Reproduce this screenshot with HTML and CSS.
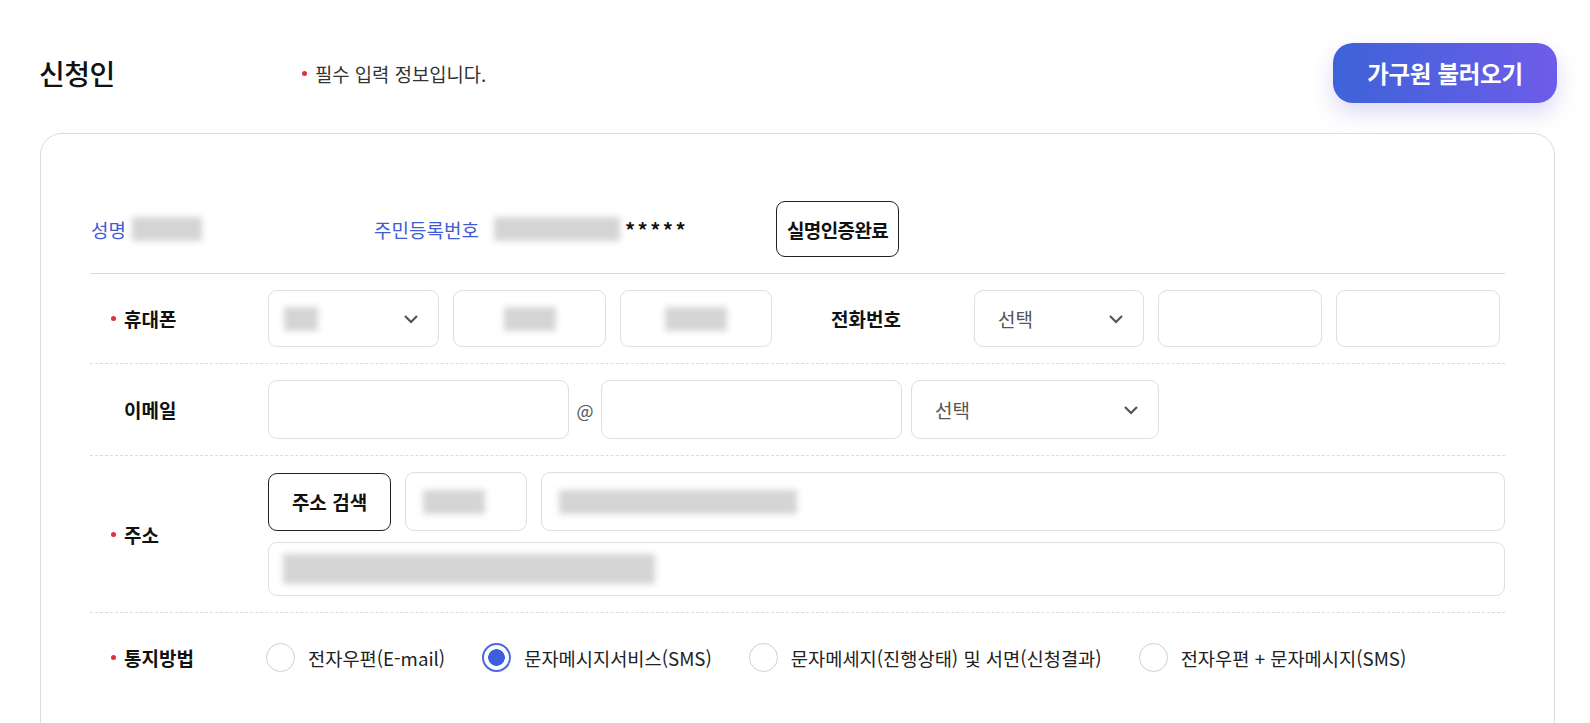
FILE: index.html
```html
<!DOCTYPE html>
<html lang="ko">
<head>
<meta charset="utf-8">
<title>신청인</title>
<link rel="stylesheet" href="styles.css">
</head>
<body>
<div class="page">
  <header class="head">
    <div class="title-wrap">
      <h2 class="title">신청인</h2>
      <p class="req-note"><span class="dot"></span>필수 입력 정보입니다.</p>
    </div>
    <button class="family-btn" type="button">가구원 불러오기</button>
  </header>

  <section class="card">
    <div class="id-row">
      <div class="id-name">
        <span class="id-label">성명</span>
        <span class="blur b-name"></span>
      </div>
      <div class="id-rrn">
        <span class="id-label">주민등록번호</span>
        <span class="blur b-rrn"></span>
        <span class="stars">*****</span>
      </div>
      <button class="verify-btn" type="button">실명인증완료</button>
    </div>

    <div class="frow">
      <div class="flabel"><span class="rdot"></span>휴대폰</div>
      <div class="field sel w-171"><span class="blur b-sm"></span><svg class="chev" width="16" height="10" viewBox="0 0 16 10"><path d="M2 2l6 6 6-6" fill="none" stroke="#555" stroke-width="2.2"/></svg></div>
      <div class="field center w-153"><span class="blur b-md"></span></div>
      <div class="field center w-152"><span class="blur b-md2"></span></div>
      <div class="tel-label">전화번호</div>
      <div class="field sel w-170"><span class="sel-text">선택</span><svg class="chev" width="16" height="10" viewBox="0 0 16 10"><path d="M2 2l6 6 6-6" fill="none" stroke="#555" stroke-width="2.2"/></svg></div>
      <div class="field w-164"></div>
      <div class="field w-164 end"></div>
    </div>

    <div class="frow">
      <div class="flabel"><span class="rdot off"></span>이메일</div>
      <div class="field tall w-301"></div>
      <span class="at">@</span>
      <div class="field tall w-301"></div>
      <div class="field tall sel w-248 ml-9"><span class="sel-text">선택</span><svg class="chev" width="16" height="10" viewBox="0 0 16 10"><path d="M2 2l6 6 6-6" fill="none" stroke="#555" stroke-width="2.2"/></svg></div>
    </div>

    <div class="frow">
      <div class="flabel"><span class="rdot"></span>주소</div>
      <div class="addr">
        <div class="addr-line">
          <button class="search-btn" type="button">주소 검색</button>
          <div class="field tall w-122 pad-l"><span class="blur b-zip"></span></div>
          <div class="field tall grow pad-l"><span class="blur b-addr"></span></div>
        </div>
        <div class="field short pad-s"><span class="blur b-addr2"></span></div>
      </div>
    </div>

    <div class="frow last">
      <div class="flabel"><span class="rdot"></span>통지방법</div>
      <div class="radios">
        <label class="radio"><span class="circle"></span>전자우편(E-mail)</label>
        <label class="radio"><span class="circle on"></span>문자메시지서비스(SMS)</label>
        <label class="radio"><span class="circle"></span>문자메세지(진행상태) 및 서면(신청결과)</label>
        <label class="radio"><span class="circle"></span>전자우편 + 문자메시지(SMS)</label>
      </div>
    </div>
  </section>
</div>
</body>
</html>
```

FILE: styles.css
```css
html, body {
  margin: 0;
  padding: 0;
  height: 723px;
  overflow: hidden;
  background: #fff;
}
body {
  font-family: "Noto Sans CJK KR", "Noto Sans", sans-serif;
  color: #222;
}
.page {
  padding: 43px 33px 0 39px;
}
.head {
  display: flex;
  justify-content: space-between;
  align-items: center;
  height: 60px;
}
.title-wrap {
  display: flex;
  align-items: center;
}
.title {
  margin: 0;
  width: 263px;
  font-size: 28px;
  font-weight: 500;
  color: #111;
  letter-spacing: -0.5px;
}
.req-note {
  margin: 0;
  display: flex;
  align-items: center;
  font-size: 18.8px;
  color: #333;
}
.dot, .rdot {
  display: inline-block;
  flex: none;
  width: 5px;
  height: 5px;
  border-radius: 50%;
  background: #e0303a;
  margin-right: 8px;
}
.rdot.off { visibility: hidden; }
.family-btn {
  width: 224px;
  height: 60px;
  border: 0;
  border-radius: 20px;
  background: linear-gradient(90deg, #3d63d8 0%, #6e5ce9 100%);
  color: #fff;
  font-family: inherit;
  font-size: 23.5px;
  font-weight: 700;
  letter-spacing: -0.3px;
  box-shadow: 0 10px 22px rgba(95, 85, 210, 0.22);
  padding: 0;
}
.card {
  margin: 30px 2px 0 1px;
  border: 1px solid #dcdcdc;
  border-radius: 22px;
  padding: 67px 49px 80px;
}
.id-row {
  display: flex;
  align-items: center;
  height: 56px;
  padding-bottom: 16px;
  border-bottom: 1px solid #dadada;
}
.id-name {
  width: 284px;
  flex: none;
  display: flex;
  align-items: center;
  padding-left: 1px;
  box-sizing: border-box;
}
.id-rrn {
  display: flex;
  align-items: center;
}
.id-label {
  color: #3f5bd6;
  font-size: 19px;
}
.blur {
  display: inline-block;
  flex: none;
  height: 24px;
  background: #cdcdcd;
  filter: blur(3px);
  opacity: 0.85;
}
.b-name { width: 70px; margin-left: 6px; }
.b-rrn { width: 126px; margin-left: 15px; }
.b-sm { width: 34px; }
.b-md { width: 52px; }
.b-md2 { width: 62px; }
.b-zip { width: 62px; }
.b-addr { width: 238px; }
.b-addr2 { width: 372px; height: 30px; }
.stars {
  font-size: 20px;
  font-weight: 700;
  letter-spacing: 2.5px;
  margin-left: 5px;
  color: #111;
}
.verify-btn {
  flex: none;
  margin-left: 88px;
  width: 123px;
  height: 56px;
  border: 1px solid #222;
  border-radius: 9px;
  background: #fff;
  font-family: inherit;
  font-size: 19px;
  font-weight: 700;
  letter-spacing: -0.6px;
  color: #111;
  padding: 0;
}
.frow {
  display: flex;
  align-items: center;
  padding: 16px 0;
  border-bottom: 1px dashed #dcdcdc;
}
.frow.last {
  border-bottom: 0;
  padding-top: 30px;
}
.flabel {
  width: 178px;
  flex: none;
  padding-left: 21px;
  box-sizing: border-box;
  display: flex;
  align-items: center;
  font-size: 19px;
  font-weight: 700;
  color: #111;
}
.field {
  flex: none;
  box-sizing: border-box;
  height: 57px;
  border: 1px solid #dedede;
  border-radius: 9px;
  background: #fff;
  display: flex;
  align-items: center;
  margin-right: 14px;
}
.field.end { margin-right: 0; }
.field.tall { height: 59px; }
.field.short { height: 54px; margin-right: 0; }
.field.center { justify-content: center; }
.field.sel {
  justify-content: space-between;
  padding: 0 19px 0 15px;
}
.field.grow { flex: 1; margin-right: 0; }
.pad-l { padding-left: 17px; }
.pad-s { padding-left: 14px; }
.sel-text {
  font-size: 19px;
  color: #555;
  padding-left: 8px;
}
.w-171 { width: 171px; }
.w-153 { width: 153px; }
.w-152 { width: 152px; }
.w-170 { width: 170px; }
.w-164 { width: 164px; }
.w-301 { width: 301px; margin-right: 0; }
.w-248 { width: 248px; }
.w-122 { width: 122px; }
.ml-9 { margin-left: 9px; }
.frow .field.w-152 { margin-right: 0; }
.tel-label {
  flex: none;
  margin-left: 59px;
  width: 143px;
  font-size: 19px;
  font-weight: 700;
  color: #111;
}
.at {
  flex: none;
  width: 32px;
  text-align: center;
  font-size: 18px;
  color: #555;
}
.chev { display: block; flex: none; }
.addr {
  flex: 1;
  display: flex;
  flex-direction: column;
  gap: 11px;
}
.addr-line {
  display: flex;
  align-items: center;
}
.search-btn {
  flex: none;
  width: 123px;
  height: 58px;
  border: 1px solid #222;
  border-radius: 9px;
  background: #fff;
  font-family: inherit;
  font-size: 19px;
  font-weight: 700;
  color: #111;
  margin-right: 14px;
  padding: 0;
}
.radios {
  display: flex;
  align-items: center;
  gap: 37px;
  margin-left: -2px;
}
.radio {
  display: flex;
  align-items: center;
  font-size: 18.7px;
  color: #222;
}
.circle {
  box-sizing: border-box;
  flex: none;
  width: 29px;
  height: 29px;
  border-radius: 50%;
  border: 1px solid #cfcfcf;
  margin-right: 13px;
  background: #fff;
}
.circle.on {
  border: 2px solid #4a68e0;
  background: radial-gradient(circle, #3d5fdb 0 8px, #fff 8.6px);
}
```
